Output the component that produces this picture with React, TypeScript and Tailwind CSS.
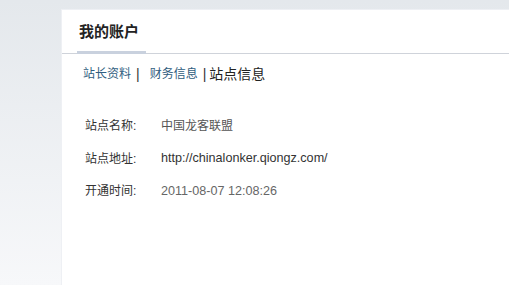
const rows = [
  { label: "站点名称:", value: "中国龙客联盟", cls: "text-[12px] text-[#555]" },
  { label: "站点地址:", value: "http://chinalonker.qiongz.com/", cls: "text-[12.6px] text-[#333]" },
  { label: "开通时间:", value: "2011-08-07 12:08:26", cls: "text-[12.6px] text-[#666]" },
];

const App = () => {
  return (
    <div
      className="h-[285px] w-[509px] overflow-hidden bg-gradient-to-b from-[#e4e8ec] to-[#f7f8fa] pl-[61px] pt-[9px]"
      style={{ fontFamily: '"Liberation Sans", "Noto Sans CJK SC", sans-serif' }}
    >
      <div className="h-full border-l border-t border-[#eef0f4] bg-white">
        {/* header */}
        <div className="relative h-[44px] border-b border-[#cfd3da] pl-[17px] pt-[11px]">
          <h1 className="text-[15px] font-bold leading-[21px] text-[#222]">我的账户</h1>
          <div className="absolute bottom-[-1px] left-[15px] h-[3px] w-[69px] bg-[#c9d1de]" />
        </div>

        {/* tabs */}
        <div className="mt-[12px] flex items-center pl-[21px] text-[12px] leading-[16px]">
          <a className="text-[#2f5d80]">站长资料</a>
          <span className="ml-[5px] mr-[10px] text-[14px] text-[#333]">|</span>
          <a className="text-[#2f5d80]">财务信息</a>
          <span className="ml-[5px] mr-[3px] text-[14px] text-[#333]">|</span>
          <span className="text-[14px] text-[#222]">站点信息</span>
        </div>

        {/* info table */}
        <div className="mt-[28px] pl-[23px] text-[12px]">
          {rows.map((r) => (
            <div key={r.label} className="flex h-[32.5px] items-center">
              <span className="w-[76px] text-[#333]">{r.label}</span>
              <span className={r.cls}>{r.value}</span>
            </div>
          ))}
        </div>
      </div>
    </div>
  );
};

export default App;
